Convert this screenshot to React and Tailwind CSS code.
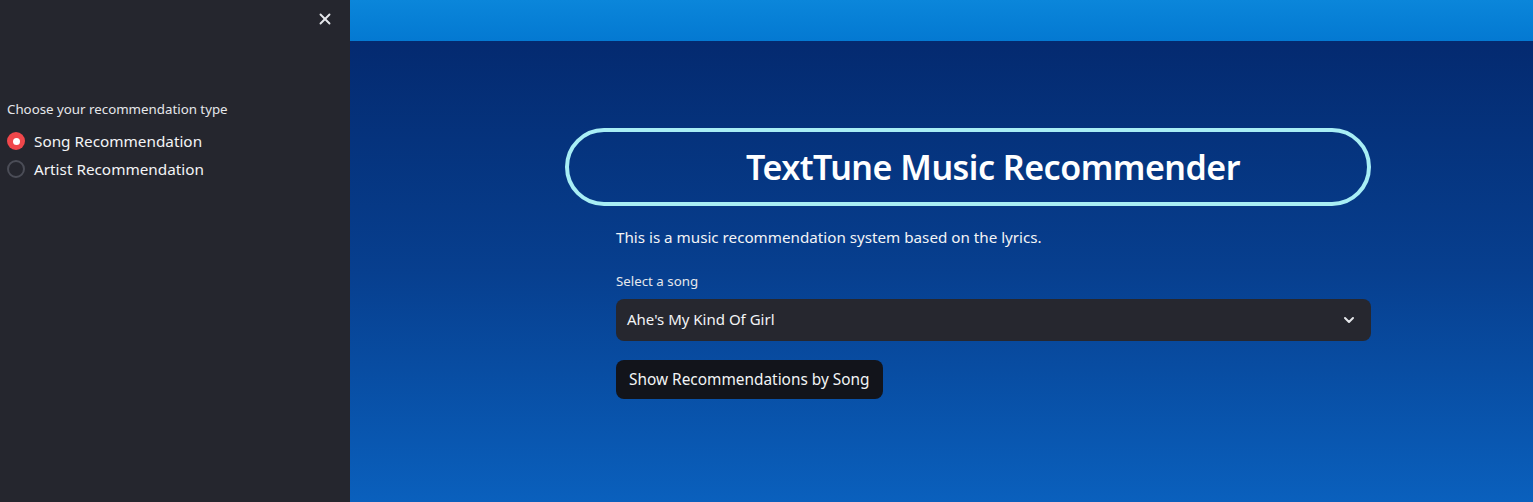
import { X, ChevronDown } from "lucide-react";

const App = () => {
  return (
    <div
      className="flex w-[1533px] h-[502px] overflow-hidden text-white"
      style={{ fontFamily: "'Noto Sans', 'Open Sans', sans-serif" }}
    >
      {/* Sidebar */}
      <aside className="w-[350px] shrink-0 bg-[#25262e] flex flex-col">
        <div className="flex justify-end pt-[10px] pr-[16px]">
          <X className="w-[18px] h-[18px] text-gray-200 stroke-[2.5]" />
        </div>
        <div className="pl-[7px] pt-[72px]">
          <p className="text-[13.3px] text-gray-200 leading-[18px]">
            Choose your recommendation type
          </p>
          <div className="mt-[13px] flex flex-col gap-[8px]">
            <label className="flex items-center gap-[9px] h-[20px]">
              <span className="w-[18px] h-[18px] rounded-full bg-[#f0474b] flex items-center justify-center">
                <span className="w-[7px] h-[7px] rounded-full bg-white" />
              </span>
              <span className="text-[15.3px] text-gray-100">Song Recommendation</span>
            </label>
            <label className="flex items-center gap-[9px] h-[20px]">
              <span className="w-[18px] h-[18px] rounded-full border-2 border-[#4b4d57]" />
              <span className="text-[15.3px] text-gray-100">Artist Recommendation</span>
            </label>
          </div>
        </div>
      </aside>

      {/* Main */}
      <main className="flex-1 flex flex-col">
        <div className="h-[41px] bg-gradient-to-b from-[#0b86da] to-[#0479d2] shrink-0" />
        <div className="flex-1 bg-gradient-to-b from-[#042a70] via-[#073f8f] to-[#0a60bd] pl-[215px] pt-[87px]">
          <div className="w-[806px] h-[78px] rounded-full border-4 border-[#a8eef5] flex items-center justify-center pl-[50px]">
            <h1 className="text-[34px] font-semibold tracking-[-0.5px]">TextTune Music Recommender</h1>
          </div>
          <div className="ml-[51px] w-[755px]">
            <p className="mt-[20px] text-[15.2px] text-gray-100">
              This is a music recommendation system based on the lyrics.
            </p>
            <p className="mt-[23px] text-[13.3px] text-gray-200">Select a song</p>
            <div className="mt-[7px] h-[42px] rounded-lg bg-[#26272f] flex items-center justify-between pl-[11px] pr-[14px]">
              <span className="text-[15px] text-gray-100">Ahe's My Kind Of Girl</span>
              <ChevronDown className="w-[16px] h-[16px] text-gray-200 stroke-[3]" />
            </div>
            <button className="mt-[19px] h-[39px] px-[13px] rounded-lg bg-[#12141b] text-[15.4px] text-gray-100">
              Show Recommendations by Song
            </button>
          </div>
        </div>
      </main>
    </div>
  );
};

export default App;
